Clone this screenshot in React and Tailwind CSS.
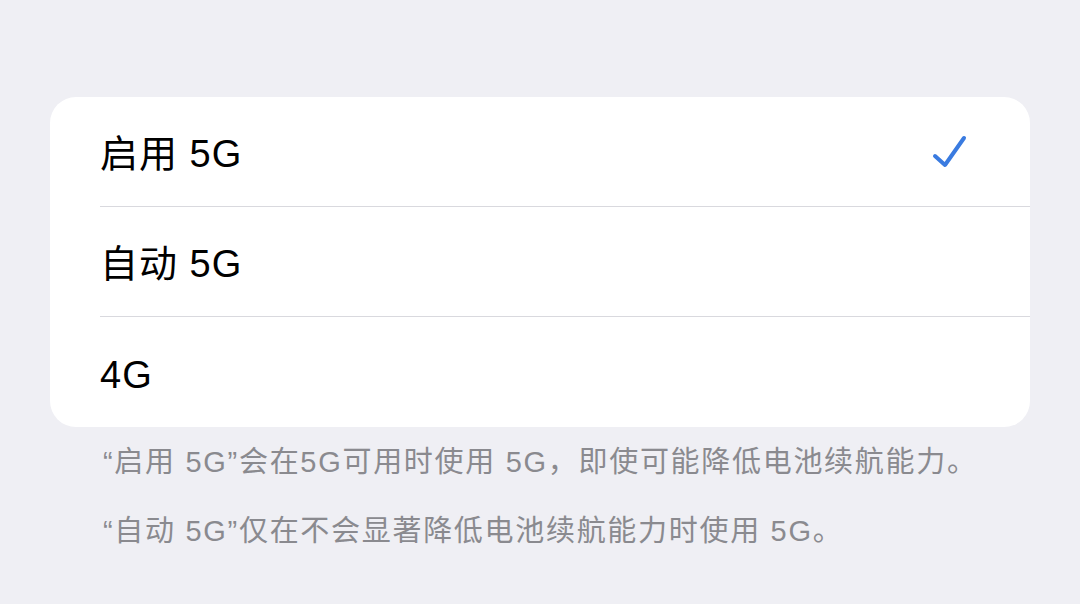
import React from 'react';

const FONT = { fontFamily: '"Liberation Sans", "Noto Sans CJK SC", sans-serif' };

const options = [
  { label: '启用 5G', checked: true },
  { label: '自动 5G', checked: false },
  { label: '4G', checked: false },
];

function Check() {
  return (
    <svg width="40" height="40" viewBox="0 0 40 40" fill="none">
      <path d="M5 24 L15 33 L34 6" stroke="#3a7be0" strokeWidth="4" strokeLinecap="round" strokeLinejoin="round" />
    </svg>
  );
}

export default function App() {
  return (
    <div className="w-[1080px] h-[604px] bg-[#efeff4] overflow-hidden" style={FONT}>
      <div className="pt-[97px] px-[50px]">
        {/* 选项卡片 */}
        <div className="bg-white rounded-[26px] overflow-hidden">
          {options.map((o, i) => (
            <div key={o.label} className="pl-[50px]">
              <div className={`h-[110px] flex items-center justify-between pr-[60px] ${i < options.length - 1 ? 'border-b border-[#d9d9de]' : ''}`}>
                <span className="text-[38px] tracking-[1px] text-black leading-none pt-[5px]">{o.label}</span>
                {o.checked && <Check />}
              </div>
            </div>
          ))}
        </div>

        {/* 说明文字 */}
        <div className="pl-[53px] pt-[1px] text-[29px] tracking-[1.7px] text-[#8a8a8f] leading-[69px]">
          <p>“启用 5G”会在5G可用时使用 5G，即使可能降低电池续航能力。</p>
          <p>“自动 5G”仅在不会显著降低电池续航能力时使用 5G。</p>
        </div>
      </div>
    </div>
  );
}
